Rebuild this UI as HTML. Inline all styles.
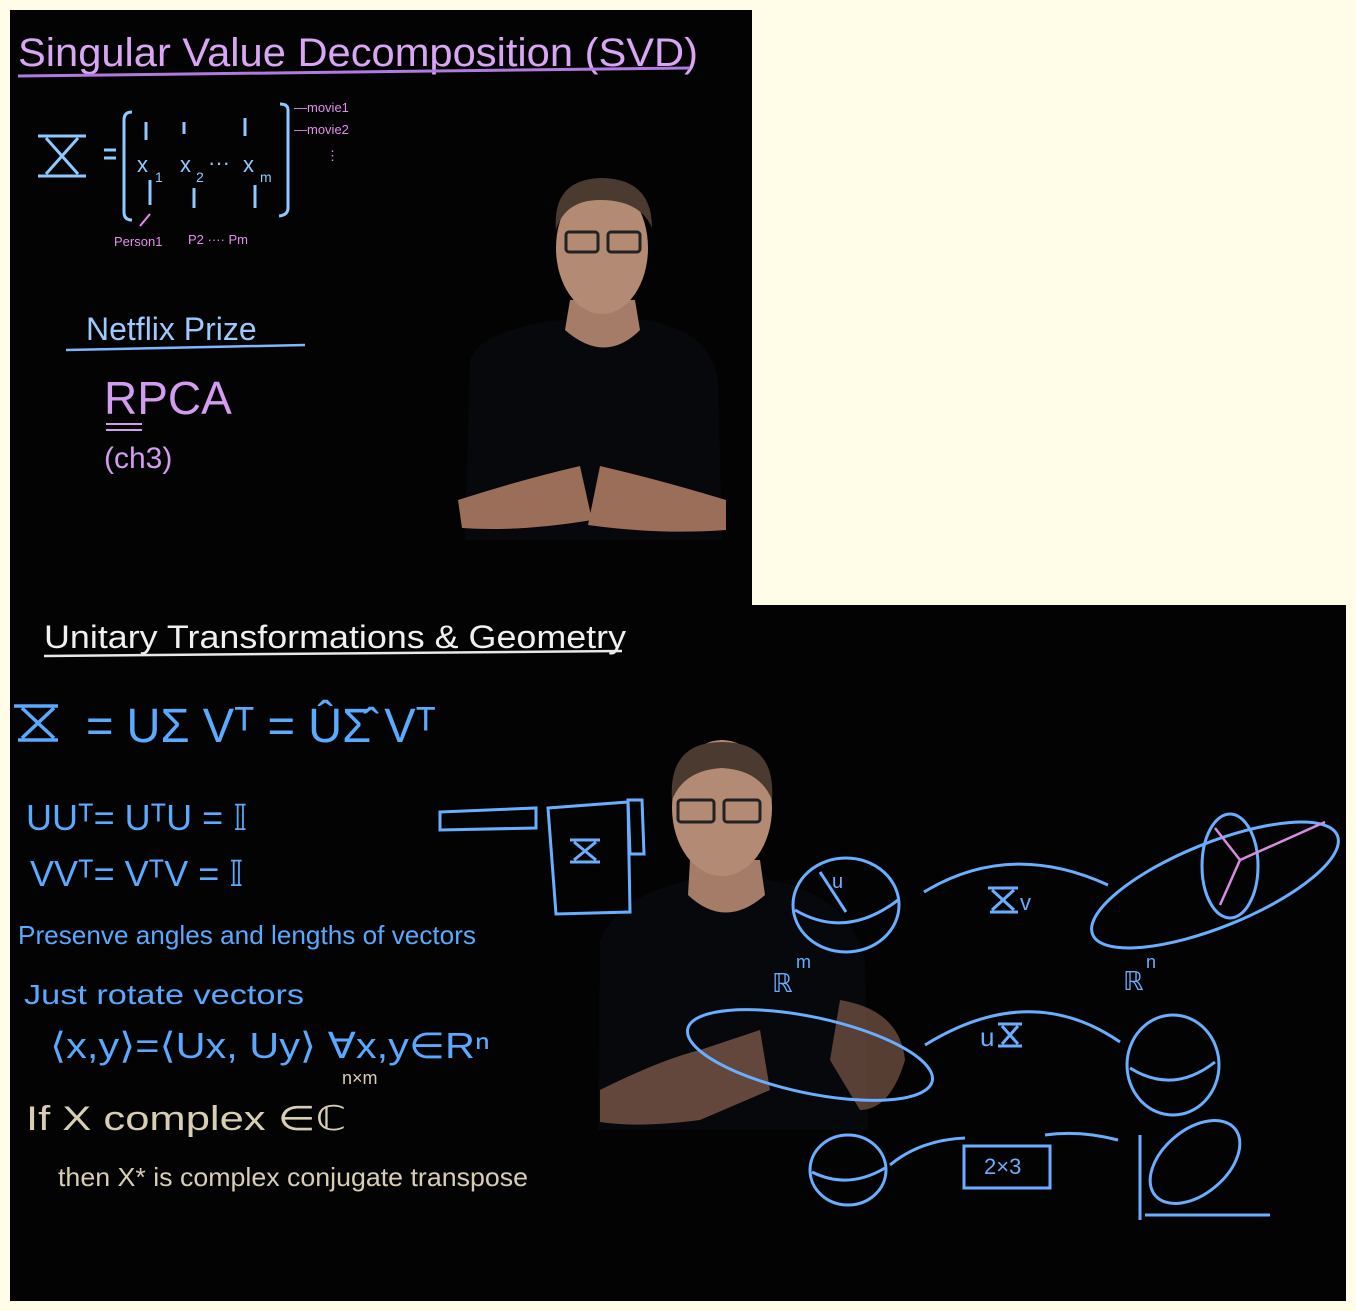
<!DOCTYPE html>
<html><head><meta charset="utf-8"><style>
html,body{margin:0;padding:0;background:#fffde8;}
svg{display:block;}
text{font-family:"Liberation Sans",sans-serif;}
</style></head><body>
<svg width="1356" height="1311" viewBox="0 0 1356 1311" xmlns="http://www.w3.org/2000/svg">
<rect width="1356" height="1311" fill="#fffde8"/>
<rect x="10" y="10" width="742" height="595" fill="#030303"/>
<rect x="10" y="605" width="1336" height="696" fill="#030303"/>

<!-- TOP PANEL person -->
<g>
<path d="M470 360 Q480 330 560 320 L645 320 Q710 330 718 380 L722 540 L465 540 Z" fill="#07080c"/>
<path d="M570 300 L635 300 L640 330 Q605 365 565 330 Z" fill="#a47c68"/>
<ellipse cx="602" cy="248" rx="46" ry="66" fill="#b38a74"/>
<path d="M556 230 Q552 180 600 178 Q652 178 652 228 Q640 200 600 200 Q565 200 556 230Z" fill="#4a3a30"/>
<rect x="566" y="232" width="32" height="20" rx="3" fill="none" stroke="#222" stroke-width="3"/>
<rect x="608" y="232" width="32" height="20" rx="3" fill="none" stroke="#222" stroke-width="3"/>
<path d="M458 500 Q520 480 580 466 L592 520 Q520 532 462 528 Z" fill="#9a6e58"/>
<path d="M726 500 Q660 480 600 466 L588 525 Q660 535 726 530 Z" fill="#9a6e58"/>
</g>

<!-- TOP PANEL text -->
<g fill="#d9a5f5" font-size="40">
<text x="18" y="66" textLength="680" lengthAdjust="spacingAndGlyphs">Singular Value Decomposition (SVD)</text>
</g>
<path d="M18 76 Q300 74 690 68" stroke="#b07be0" stroke-width="3" fill="none"/>

<g fill="none" stroke="#8ccaff" stroke-width="3">
<path d="M38 136 H86 M38 176 H86 M46 138 L78 174 M78 138 L46 174"/>
<path d="M104 150 H116 M104 158 H116"/>
<path d="M132 112 Q124 112 124 120 V212 Q124 220 132 220"/>
<path d="M280 104 Q288 104 288 110 V208 Q288 215 279 216"/>
<path d="M146 122 V140 M184 122 V134 M245 118 V136 M150 180 V205 M194 188 V208 M255 185 V208"/>
</g>
<g fill="#8ccaff" font-size="22">
<text x="137" y="172">x</text><text x="155" y="182" font-size="14">1</text>
<text x="180" y="172">x</text><text x="196" y="182" font-size="14">2</text>
<text x="208" y="170">···</text>
<text x="243" y="172">x</text><text x="260" y="182" font-size="14">m</text>
</g>
<g fill="#e68df0" font-size="13">
<text x="294" y="112">—movie1</text>
<text x="294" y="134">—movie2</text>
<text x="326" y="160">⋮</text>
<text x="114" y="246">Person1</text>
<text x="188" y="244">P2 ···· Pm</text>
</g>
<path d="M140 226 L150 214" stroke="#e68df0" stroke-width="2"/>
<text x="86" y="340" fill="#9fc8ff" font-size="32">Netflix Prize</text>
<path d="M66 350 L305 345" stroke="#7fb6ff" stroke-width="2.5"/>
<text x="104" y="414" fill="#d49cf0" font-size="46">RPCA</text>
<path d="M106 424 H142 M106 430 H142" stroke="#d49cf0" stroke-width="2"/>
<text x="104" y="468" fill="#d49cf0" font-size="30">(ch3)</text>

<!-- BOTTOM PANEL person -->
<g>
<path d="M600 940 Q620 895 690 880 L770 880 Q850 895 865 960 L868 1130 L598 1130 Z" fill="#07080c"/>
<path d="M690 860 L760 860 L765 895 Q725 930 688 895 Z" fill="#a47c68"/>
<ellipse cx="722" cy="808" rx="50" ry="68" fill="#b38a74"/>
<path d="M672 800 Q668 742 722 742 Q776 742 772 800 Q760 770 722 768 Q684 770 672 800Z" fill="#4a3a30"/>
<rect x="678" y="800" width="36" height="22" rx="3" fill="none" stroke="#222" stroke-width="3"/>
<rect x="724" y="800" width="36" height="22" rx="3" fill="none" stroke="#222" stroke-width="3"/>
<path d="M600 1090 Q660 1060 700 1050 L760 1030 L770 1090 L700 1120 Q640 1128 600 1122Z" fill="#7a5848" opacity="0.8"/>
<path d="M840 1000 Q900 1010 905 1060 Q890 1110 860 1110 L830 1060Z" fill="#7a5848" opacity="0.7"/>
</g>

<!-- BOTTOM text -->
<text x="44" y="648" fill="#f0f0f0" font-size="32" textLength="582" lengthAdjust="spacingAndGlyphs">Unitary Transformations &amp; Geometry</text>
<path d="M44 656 L622 651" stroke="#e8e8e8" stroke-width="2.5"/>
<g fill="none" stroke="#5aaaff" stroke-width="3.5">
<path d="M14 706 H58 M18 740 H58 M22 708 L54 738 M54 708 L22 738"/>
</g>
<text x="86" y="742" fill="#5aaaff" font-size="48" textLength="350" lengthAdjust="spacingAndGlyphs">= UΣ Vᵀ  = ÛΣ̂ Vᵀ</text>
<text x="26" y="830" fill="#5aaaff" font-size="36">UUᵀ= UᵀU = 𝕀</text>
<text x="30" y="886" fill="#5aaaff" font-size="36">VVᵀ= VᵀV = 𝕀</text>
<text x="18" y="944" fill="#5aa8ff" font-size="26" textLength="458" lengthAdjust="spacingAndGlyphs">Presenve  angles  and  lengths of vectors</text>
<text x="24" y="1004" fill="#5aa8ff" font-size="28" textLength="280" lengthAdjust="spacingAndGlyphs">Just  rotate   vectors</text>
<text x="50" y="1058" fill="#5aa8ff" font-size="36" textLength="440" lengthAdjust="spacingAndGlyphs">⟨x,y⟩=⟨Ux, Uy⟩ ∀x,y∈Rⁿ</text>
<text x="26" y="1130" fill="#d8ceb4" font-size="34" textLength="320" lengthAdjust="spacingAndGlyphs">If X  complex ∈ℂ</text>
<text x="342" y="1084" fill="#d8ceb4" font-size="18">n×m</text>
<text x="58" y="1186" fill="#d8ceb4" font-size="26" textLength="470" lengthAdjust="spacingAndGlyphs">then  X*  is complex conjugate transpose</text>

<!-- diagrams -->
<g fill="none" stroke="#6aaeff" stroke-width="3">
<path d="M440 812 L536 808 L536 828 L440 830 Z"/>
<path d="M548 808 L628 802 L630 912 L556 914 Z"/>
<path d="M628 800 L642 800 L644 854 L630 854 Z"/>
<path d="M570 840 H600 M570 862 H600 M574 842 L596 860 M596 842 L574 860"/>
<ellipse cx="846" cy="905" rx="53" ry="47"/>
<path d="M795 910 Q846 940 898 900"/>
<path d="M846 912 L820 872"/>
<path d="M924 892 Q1010 840 1108 885"/>
<path d="M988 888 H1018 M990 912 H1018 M992 890 L1014 910 M1014 890 L992 910"/>
<ellipse cx="1215" cy="885" rx="132" ry="42" transform="rotate(-22 1215 885)"/>
<ellipse cx="1230" cy="866" rx="28" ry="52"/>
<path d="M1120 1042 Q1030 980 925 1045"/>
<ellipse cx="1173" cy="1065" rx="46" ry="50"/>
<path d="M1130 1068 Q1173 1095 1215 1062"/>
<ellipse cx="810" cy="1055" rx="125" ry="38" transform="rotate(12 810 1055)"/>
<ellipse cx="848" cy="1170" rx="38" ry="35"/>
<path d="M812 1172 Q848 1190 885 1168"/>
<path d="M890 1165 Q920 1140 965 1138"/>
<rect x="964" y="1146" width="86" height="42"/>
<path d="M1045 1135 Q1080 1130 1118 1140"/>
<path d="M1140 1135 V1220 M1145 1215 H1270"/>
<ellipse cx="1195" cy="1162" rx="52" ry="32" transform="rotate(-40 1195 1162)"/>
</g>
<g fill="none" stroke="#d88ce0" stroke-width="2.5">
<path d="M1240 860 L1325 822 M1240 860 L1215 828 M1240 860 L1220 905"/>
</g>
<g fill="#6aaeff" font-size="26">
<text x="772" y="992">ℝ</text><text x="796" y="968" font-size="18">m</text>
<text x="1123" y="990">ℝ</text><text x="1146" y="968" font-size="18">n</text>
<text x="980" y="1046">u</text>
<text x="1020" y="910" font-size="22">v</text>
<text x="832" y="888" font-size="20">u</text>
<text x="984" y="1174" font-size="22">2×3</text>
</g>
<g fill="none" stroke="#6aaeff" stroke-width="3">
<path d="M998 1024 H1022 M998 1046 H1022 M1002 1026 L1018 1044 M1018 1026 L1002 1044"/>
</g>
</svg>
</body></html>
